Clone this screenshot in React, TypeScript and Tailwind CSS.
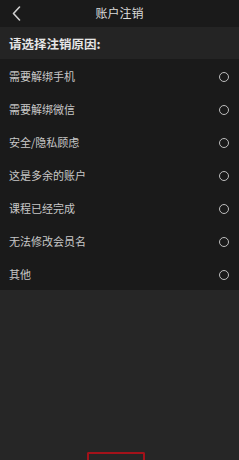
import React, { useState } from 'react';

const reasons = [
  '需要解绑手机',
  '需要解绑微信',
  '安全/隐私顾虑',
  '这是多余的账户',
  '课程已经完成',
  '无法修改会员名',
  '其他',
];

const App: React.FC = () => {
  const [selected, setSelected] = useState<number | null>(null);

  return (
    <div
      className="w-[239px] h-[460px] overflow-hidden flex flex-col bg-[#262626]"
      style={{ fontFamily: '"Noto Sans CJK SC", "Noto Sans", sans-serif' }}
    >
      {/* Header */}
      <div className="h-[27px] shrink-0 relative flex items-center justify-center bg-[#1a1a1a]">
        <button className="absolute left-[9px] top-[5px] w-[14px] h-[16px] flex items-center justify-center">
          <svg width="9" height="15" viewBox="0 0 9 15" fill="none">
            <path d="M7.5 1 L1.5 7.5 L7.5 14" stroke="#d0d0d0" strokeWidth="1.6" strokeLinecap="round" strokeLinejoin="round" />
          </svg>
        </button>
        <span className="text-[12px] text-[#dcdcdc] leading-none -mt-[1px]">账户注销</span>
      </div>

      {/* Section title */}
      <div className="h-[32px] shrink-0 flex items-center px-[9px] pt-[2px] bg-[#242424]">
        <span className="text-[12.5px] font-bold text-[#e6e6e6] leading-none">请选择注销原因:</span>
      </div>

      {/* Reasons */}
      <div className="flex flex-col bg-[#1a1a1a]">
        {reasons.map((r, i) => (
          <div
            key={r}
            onClick={() => setSelected(i)}
            className="h-[33px] flex items-center justify-between pl-[9px] pr-[10px] pt-[2px] cursor-pointer"
          >
            <span className="text-[11px] text-[#c8c8c8] leading-none">{r}</span>
            <span
              className={`w-[10px] h-[10px] rounded-full border ${
                selected === i ? 'border-[#c00] bg-[#c00]' : 'border-[#bdbdbd]'
              }`}
            />
          </div>
        ))}
      </div>

      <div className="flex-1" />

      {/* Bottom button */}
      <div className="flex">
        <button className="ml-[87px] w-[58px] h-[12px] -mb-[4px] border-2 border-b-0 border-[#a3121a] rounded-t-[2px] bg-[#262626]" />
      </div>
    </div>
  );
};

export default App;
